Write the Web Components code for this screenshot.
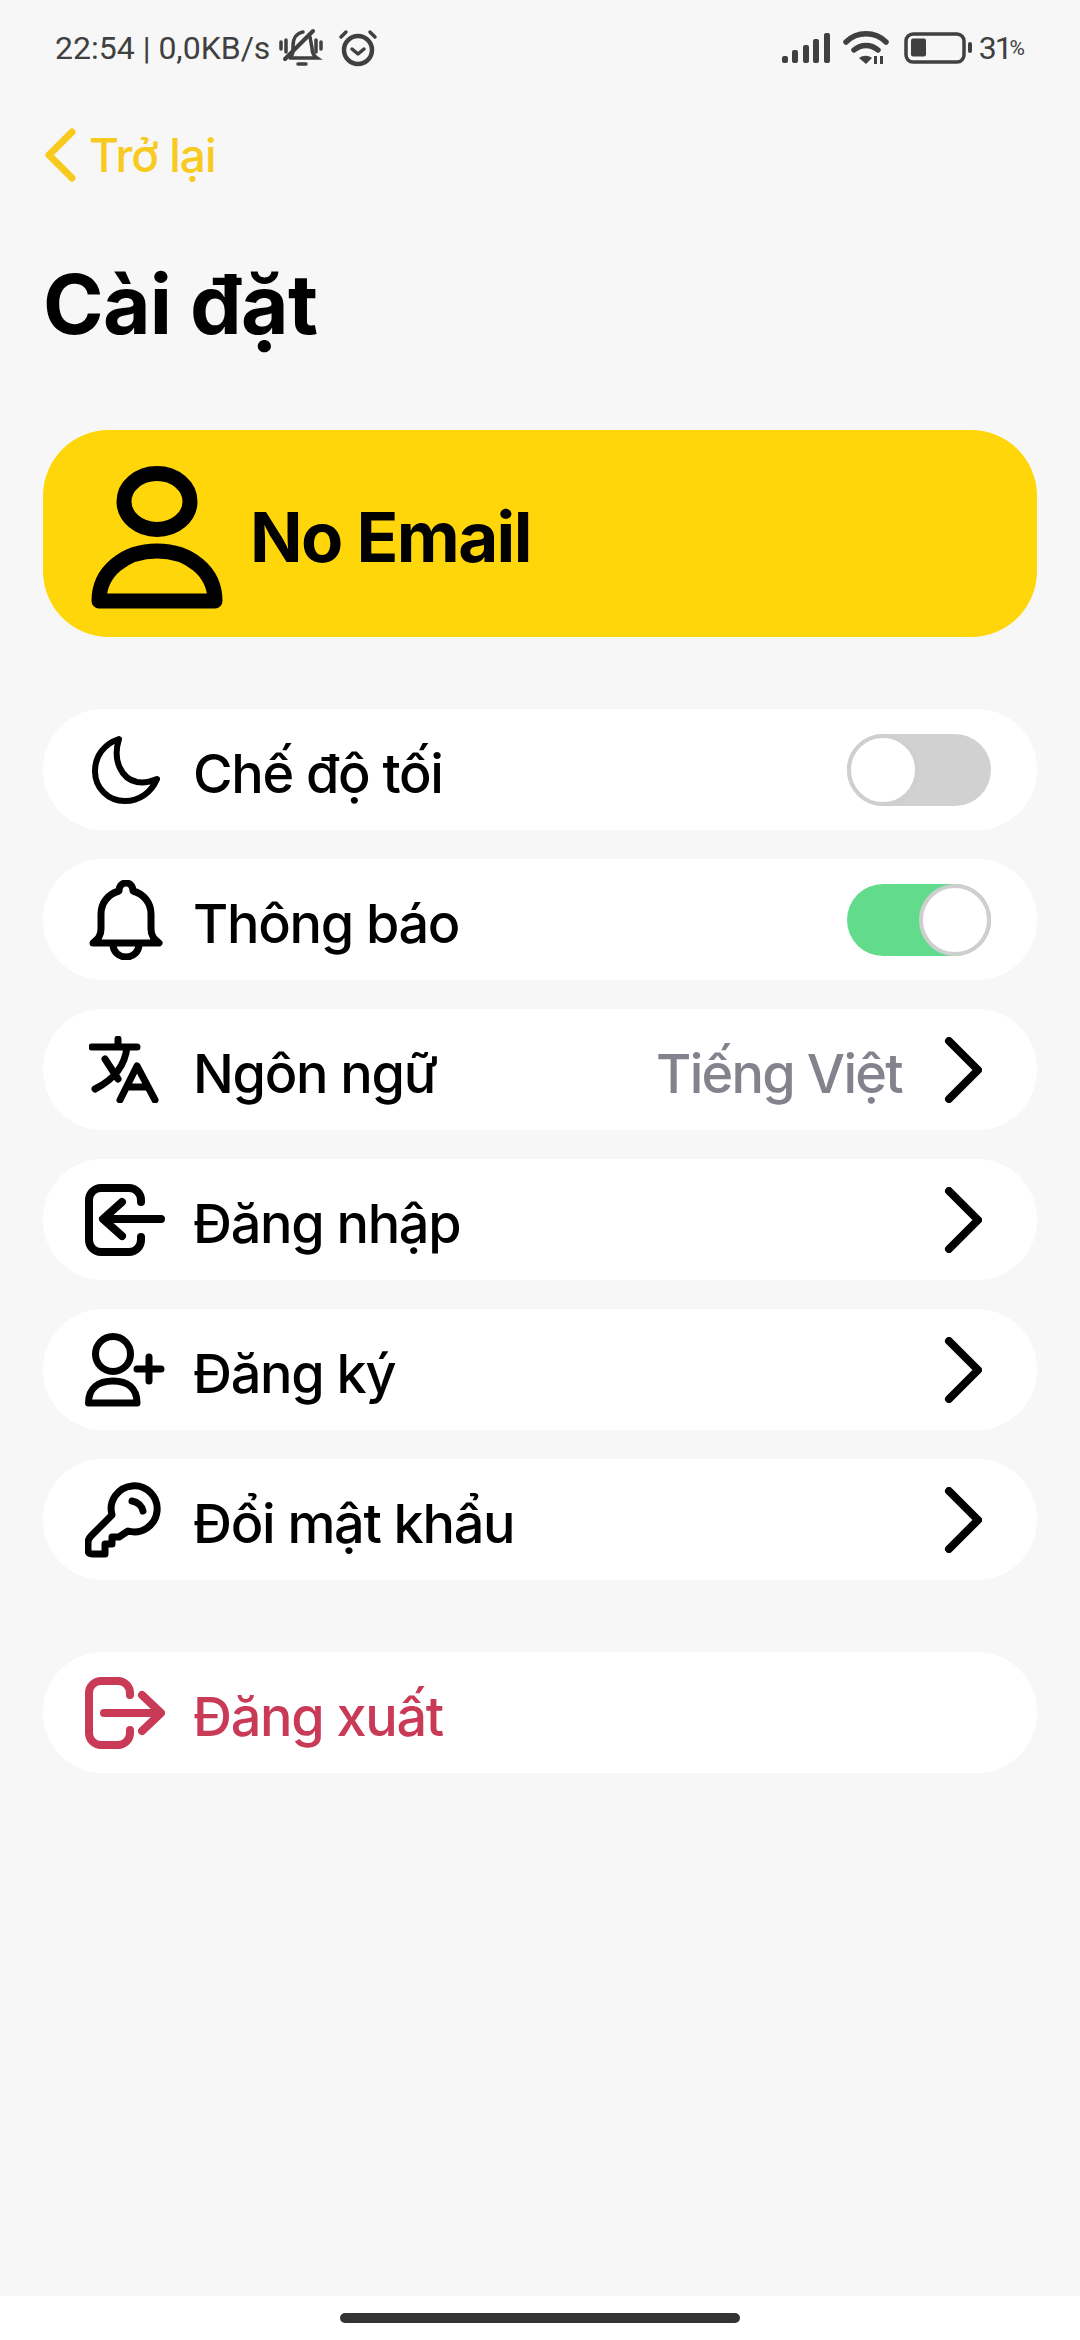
<!DOCTYPE html>
<html lang="vi">
<head>
<meta charset="utf-8">
<title>Cài đặt</title>
<style>
html,body{margin:0;padding:0;height:100%}
body{background:#f7f7f7;font-family:Inter,"Liberation Sans",sans-serif}
</style>
</head>
<body>
<settings-page></settings-page>

<script>
const STROKE='fill="none" stroke="currentColor" stroke-linecap="round" stroke-linejoin="round"'

const ICONS={
  moon:`<svg style="margin-left:7px" width="69" height="68" viewBox="0 0 69 68" ${STROKE} stroke-width="6"><path d="M27 3C12 8 3 20 3 35c0 17 13 30 30 30 14 0 26-8 32-22-7 3-14 4-20 3C30 43 20 25 27 3z"/></svg>`,
  bell:`<svg style="margin-left:4px" width="74" height="80" viewBox="0 0 74 80" ${STROKE} stroke-width="7"><path d="M4 63c5-4 8-7 8-14V34c0-11 7-20 18-23 0-5 3-8 7-8s7 3 7 8c11 3 18 12 18 23v15c0 7 3 10 8 14z"/><path d="M24 64c0 8 6 13 13 13s13-5 13-13"/></svg>`,
  lang:`<svg style="margin-left:4px" width="70" height="67" viewBox="0 0 70 67" ${STROKE} stroke-width="7"><path d="M3 11h45M29 3v8M38 11C36 30 24 44 6 53M16 23l13 20"/><path d="M31 64l17-34 18 34M38 51h21"/></svg>`,
  login:`<svg width="80" height="72" viewBox="0 0 80 72" ${STROKE} stroke-width="8"><path d="M56 18v-2A12 12 0 0 0 44 4H16A12 12 0 0 0 4 16v40a12 12 0 0 0 12 12h28a12 12 0 0 0 12-12v-3"/><path d="M19 35h57M37 18L18 35l19 17"/></svg>`,
  signup:`<svg width="80" height="74" viewBox="0 0 80 74" ${STROKE} stroke-width="7"><ellipse cx="28" cy="21" rx="17.500" ry="17.500"/><path d="M3.500 70c0-15 10-22 24.500-22s24 7 24 22z"/><path d="M52 36h24M64 24v24"/></svg>`,
  key:`<svg width="78" height="77" viewBox="0 0 78 77" ${STROKE} stroke-width="7"><path d="M27 34a23 23 0 1 1 16 16L34 56H27V63H20V73H7Q3 73 3 69V62Q3 58 6 55z"/><path d="M47 20c6 1 10 5 11 10"/></svg>`,
  logout:`<svg width="80" height="72" viewBox="0 0 80 72" ${STROKE} stroke-width="8"><path d="M45 18v-2A12 12 0 0 0 33 4H16A12 12 0 0 0 4 16v40a12 12 0 0 0 12 12h17a12 12 0 0 0 12-12v-3"/><path d="M19 36h56M57 18l19 18-19 18"/></svg>`,
  user:`<svg width="132" height="143" viewBox="0 0 132 143" fill="none" stroke="currentColor" stroke-linejoin="round" stroke-width="15"><ellipse cx="66" cy="35.500" rx="33" ry="28"/><path d="M8 135c0-30 26-50 58-50s58 20 58 50z"/></svg>`
}

class StatusBar extends HTMLElement{
  constructor(){
    super()
    this.attachShadow({mode:'open'})
    this.shadowRoot.innerHTML=`
<style>
:host{display:flex;align-items:center;justify-content:space-between;height:48px;padding:24px 55px 0 55px;color:#404040;font:400 32px Roboto,"Liberation Sans",sans-serif}
.side{display:flex;align-items:center}
.num{margin-left:7px;letter-spacing:-2px}
.pct{font-size:21px;align-self:flex-end;margin:0 0 7px -1px}
svg{display:block}
</style>
<div class="side">
  <span>22:54 | 0,0KB/s</span>
  <svg style="margin-left:9px" width="44" height="40" viewBox="0 0 44 40" fill="none" stroke="currentColor" stroke-linecap="round" stroke-width="3.500"><path d="M2 14v7M7 12v12M37 12v12M42 14v7"/><path d="M11 30c3-3 3-6 3-12 0-8 4-13 10-14M31 9l2 11c0 5 2 8 5 10H11M19 36h8"/><path d="M34 3L6 31" stroke-width="4"/></svg>
  <svg style="margin-left:15px" width="40" height="38" viewBox="0 0 40 38" fill="none" stroke="currentColor" stroke-linecap="round" stroke-linejoin="round" stroke-width="3.500"><circle cx="20" cy="21" r="14" stroke-width="4.500"/><path d="M14 20l6 5 6-5M3 8l5-5M37 8l-5-5"/></svg>
</div>
<div class="side">
  <svg width="48" height="32" viewBox="0 0 48 32" fill="currentColor"><rect x="0" y="24" width="6" height="7" rx="2"/><rect x="10" y="18" width="6" height="13" rx="2"/><rect x="21" y="13" width="6" height="18" rx="2"/><rect x="31" y="7" width="6" height="24" rx="2"/><rect x="42" y="1" width="6" height="30" rx="2"/></svg>
  <svg style="margin-left:13px" width="46" height="34" viewBox="0 0 46 34"><g fill="none" stroke="currentColor" stroke-width="5.500" stroke-linecap="round"><path d="M3 11C14 0 32 0 43 11"/><path d="M11 19c7-6 17-6 24 0"/></g><path d="M16 27c4-3 9-3 13 0l-6 6z" fill="currentColor"/><path d="M31 25h3v8h-3zM37 25h3v8h-3z" fill="currentColor"/></svg>
  <svg style="margin-left:15px" width="68" height="32" viewBox="0 0 68 32" fill="none"><rect x="2" y="2" width="58" height="28" rx="7" stroke="currentColor" stroke-width="3.500"/><rect x="7" y="6.500" width="15" height="18" rx="2" fill="currentColor"/><rect x="64" y="10" width="4" height="11" rx="2" fill="currentColor"/></svg>
  <span class="num">31</span><span class="pct">%</span>
</div>`
  }
}

class BackLink extends HTMLElement{
  constructor(){
    super()
    this.attachShadow({mode:'open'})
    this.shadowRoot.innerHTML=`
<style>
:host{display:flex;align-items:center;gap:13px;color:#f8ca1f;font:500 46px Inter,sans-serif;letter-spacing:-1px;height:54px}
svg{display:block;margin-left:2px}
</style>
<svg width="31" height="54" viewBox="0 0 31 54" fill="none" stroke="currentColor" stroke-width="7" stroke-linecap="round" stroke-linejoin="round"><path d="M27 4L4 27l23 23"/></svg>
<slot></slot>`
  }
}

class ProfileCard extends HTMLElement{
  constructor(){
    super()
    this.attachShadow({mode:'open'})
    this.shadowRoot.innerHTML=`
<style>
:host{display:flex;align-items:center;height:207px;box-sizing:border-box;padding:0 0 0 48px;background:#ffd60a;border-radius:66px;color:#000;font:700 69px Inter,sans-serif;letter-spacing:-1.6px}
svg{display:block}
.user{display:block;margin-top:7px}
.txt{margin-left:27px;padding-top:7px}
</style>
<span class="user">${ICONS.user}</span>
<span class="txt"><slot></slot></span>`
  }
}

class ToggleSwitch extends HTMLElement{
  constructor(){
    super()
    this.attachShadow({mode:'open'})
    this.shadowRoot.innerHTML=`
<style>
:host{display:flex;width:144px;height:72px;border-radius:36px;background:#d1d1d1}
:host([on]){background:#62db8d;justify-content:flex-end}
.knob{width:72px;height:72px;box-sizing:border-box;border-radius:50%;background:#fff;border:4px solid #cfcfcf}
</style>
<div class="knob"></div>`
  }
}

class SettingRow extends HTMLElement{
  constructor(){
    super()
    this.attachShadow({mode:'open'})
    this.shadowRoot.innerHTML=`
<style>
:host{display:flex;align-items:center;height:121px;box-sizing:border-box;padding:0 46px 0 42px;background:#fff;border-radius:60px;color:#000;font:500 54px Inter,sans-serif;letter-spacing:-1.3px}
:host([danger]){color:#c93a57}
.icon{flex:0 0 108px;display:flex;align-items:center}
.label{flex:1;padding-top:7px}
.value{color:#86828d;margin-right:42px;padding-top:7px;letter-spacing:-1.7px}
.chev{display:none}
:host([chevron]) .chev{display:block;margin-right:9px}
svg{display:block}
</style>
<div class="icon"><slot name="icon"></slot></div>
<div class="label"><slot></slot></div>
<div class="value"><slot name="value"></slot></div>
<slot name="control"></slot>
<svg class="chev" width="38" height="66" viewBox="0 0 38 66" fill="none" stroke="#000" stroke-width="8" stroke-linecap="round" stroke-linejoin="round"><path d="M5 4l29 29L5 62"/></svg>`
  }
  connectedCallback(){
    const name=this.getAttribute('icon')
    if(name && !this.querySelector('[slot=icon]')){
      const holder=document.createElement('span')
      holder.slot='icon'
      // flex so the light dom svg does not sit on a text baseline
      holder.style.display='flex'
      holder.innerHTML=ICONS[name]
      this.appendChild(holder)
    }
  }
}

class HomeBar extends HTMLElement{
  constructor(){
    super()
    this.attachShadow({mode:'open'})
    this.shadowRoot.innerHTML=`
<style>
:host{display:flex;justify-content:center;align-items:flex-start;height:27px;padding-top:17px;background:#fff}
.pill{width:400px;height:10px;border-radius:5px;background:#333}
</style>
<div class="pill"></div>`
  }
}

class SettingsPage extends HTMLElement{
  constructor(){
    super()
    this.attachShadow({mode:'open'})
    this.shadowRoot.innerHTML=`
<style>
:host{display:flex;flex-direction:column;height:2340px;overflow:hidden;background:#f7f7f7}
main{flex:1;display:flex;flex-direction:column;padding:0 43px}
back-link{margin-top:56px}
h1{margin:73px 0 0;font:700 82px/100px Inter,sans-serif;letter-spacing:-.7px;color:#000}
profile-card{margin-top:75px}
.group{display:flex;flex-direction:column;gap:29px;margin-top:72px}
.logout{margin-top:72px}
</style>
<status-bar></status-bar>
<main>
  <back-link>Trở lại</back-link>
  <h1>Cài đặt</h1>
  <profile-card>No Email</profile-card>
  <div class="group">
    <setting-row icon="moon">Chế độ tối<toggle-switch slot="control"></toggle-switch></setting-row>
    <setting-row icon="bell">Thông báo<toggle-switch slot="control" on></toggle-switch></setting-row>
    <setting-row icon="lang" chevron>Ngôn ngữ<span slot="value">Tiếng Việt</span></setting-row>
    <setting-row icon="login" chevron>Đăng nhập</setting-row>
    <setting-row icon="signup" chevron>Đăng ký</setting-row>
    <setting-row icon="key" chevron>Đổi mật khẩu</setting-row>
  </div>
  <setting-row class="logout" icon="logout" danger>Đăng xuất</setting-row>
</main>
<home-bar></home-bar>`
  }
}

customElements.define('status-bar',StatusBar)
customElements.define('back-link',BackLink)
customElements.define('profile-card',ProfileCard)
customElements.define('toggle-switch',ToggleSwitch)
customElements.define('setting-row',SettingRow)
customElements.define('home-bar',HomeBar)
customElements.define('settings-page',SettingsPage)
</script>
</body>
</html>
